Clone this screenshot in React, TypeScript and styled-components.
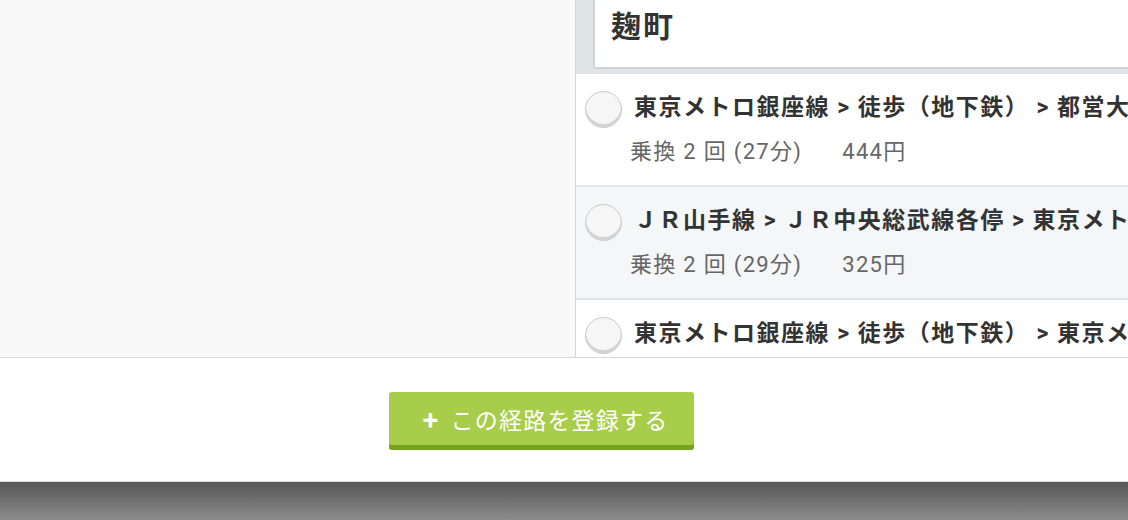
import React from "react";
import styled, { createGlobalStyle } from "styled-components";

const Global = createGlobalStyle`
  html, body { margin: 0; padding: 0; }
  body {
    width: 1128px;
    height: 520px;
    overflow: hidden;
    background: #ffffff;
    font-family: Roboto, "Noto Sans CJK JP", sans-serif;
  }
`;

const Page = styled.div`
  display: flex;
  flex-direction: column;
  height: 520px;
`;

const Main = styled.div`
  display: flex;
  height: 357px;
  border-bottom: 1px solid #d6dadd;
  overflow: hidden;
`;

const LeftPane = styled.div`
  width: 575px;
  flex: none;
  background: #f9f9f9;
  border-right: 1px solid #d3d8db;
`;

const RightPane = styled.div`
  flex: 1;
  min-width: 0;
  display: flex;
  flex-direction: column;
  overflow: hidden;
`;

const Header = styled.div`
  height: 72px;
  flex: none;
  background: #dfe4e7;
  padding: 0 0 3px 17px;
  box-sizing: border-box;
  display: flex;
`;

const StationBox = styled.div`
  flex: 1;
  background: #ffffff;
  border-left: 2px solid #cdd3d7;
  border-bottom: 2px solid #cdd3d7;
  padding: 6px 0 0 16px;
  font-size: 30px;
  font-weight: 700;
  letter-spacing: 2px;
  color: #333333;
  line-height: 42px;
`;

const Route = styled.div<{ $alt?: boolean }>`
  flex: none;
  display: flex;
  align-items: flex-start;
  gap: 12px;
  height: 113px;
  box-sizing: border-box;
  padding: 17px 0 0 9px;
  background: ${(p) => (p.$alt ? "#f4f6f8" : "#ffffff")};
  border-top: 2px solid #dfe4e7;
`;

const Radio = styled.div`
  flex: none;
  width: 37px;
  height: 37px;
  border-radius: 50%;
  box-sizing: border-box;
  background: #f6f6f6;
  border: 1px solid #c9c9c9;
  box-shadow: inset 0 -3px 0 #d3d3d3;
`;

const RouteBody = styled.div`
  min-width: 0;
  flex: 1;
  display: flex;
  flex-direction: column;
`;

const RouteTitle = styled.div`
  font-size: 23px;
  font-weight: 700;
  color: #333333;
  line-height: 34px;
  letter-spacing: 1.5px;
  white-space: nowrap;
  overflow: hidden;
`;

const RouteMeta = styled.div`
  margin-top: 12px;
  margin-left: -4px;
  display: flex;
  gap: 40px;
  font-size: 22px;
  letter-spacing: 1.3px;
  color: #666666;
  line-height: 30px;
  white-space: nowrap;
`;

const Footer = styled.div`
  height: 124px;
  flex: none;
  display: flex;
  justify-content: center;
  align-items: flex-start;
  padding: 34px 45px 0 0;
  box-sizing: border-box;
  border-bottom: 1px solid #dcdcdc;
`;

const RegisterButton = styled.button`
  width: 305px;
  height: 58px;
  border: none;
  border-radius: 3px;
  background: #a8cd4a;
  box-shadow: inset 0 -5px 0 #76a41f;
  color: #ffffff;
  font-family: Roboto, "Noto Sans CJK JP", sans-serif;
  font-size: 23px;
  font-weight: 400;
  padding: 0 0 5px 8px;
  display: flex;
  align-items: center;
  justify-content: center;
  gap: 11px;
  letter-spacing: 1.2px;
  cursor: pointer;
`;

const Plus = styled.span`
  font-family: "Noto Sans CJK JP", sans-serif;
  font-weight: 900;
  font-size: 26px;
  line-height: 1;
`;

const BottomBar = styled.div`
  flex: 1;
  background: linear-gradient(#565656, #8c8c8c);
`;

const routes = [
  { title: "東京メトロ銀座線 > 徒歩（地下鉄） > 都営大江戸線", transfer: "乗換 2 回 (27分)", fare: "444円" },
  { title: "ＪＲ山手線 > ＪＲ中央総武線各停 > 東京メトロ有楽町線", transfer: "乗換 2 回 (29分)", fare: "325円" },
  { title: "東京メトロ銀座線 > 徒歩（地下鉄） > 東京メトロ有楽町線", transfer: "乗換 2 回 (30分)", fare: "400円" },
];

export default function App() {
  return (
    <Page>
      <Global />
      <Main>
        <LeftPane />
        <RightPane>
          <Header>
            <StationBox>麹町</StationBox>
          </Header>
          {routes.map((r, i) => (
            <Route key={i} $alt={i === 1}>
              <Radio />
              <RouteBody>
                <RouteTitle>{r.title}</RouteTitle>
                <RouteMeta>
                  <span>{r.transfer}</span>
                  <span>{r.fare}</span>
                </RouteMeta>
              </RouteBody>
            </Route>
          ))}
        </RightPane>
      </Main>
      <Footer>
        <RegisterButton>
          <Plus>+</Plus>
          この経路を登録する
        </RegisterButton>
      </Footer>
      <BottomBar />
    </Page>
  );
}
